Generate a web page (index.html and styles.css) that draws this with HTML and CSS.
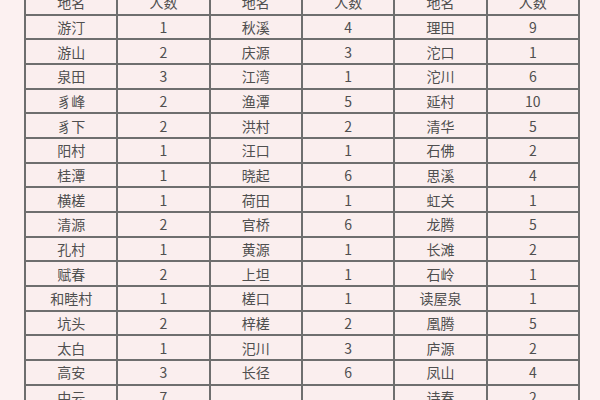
FILE: index.html
```html
<!DOCTYPE html>
<html lang="zh">
<head>
<meta charset="utf-8">
<link rel="stylesheet" href="styles.css">
</head>
<body>
<div class="page">
<table class="grid">
<thead>
<tr><th>地名</th><th>人数</th><th>地名</th><th>人数</th><th>地名</th><th>人数</th></tr>
</thead>
<tbody>
<tr><td>游汀</td><td>1</td><td>秋溪</td><td>4</td><td>理田</td><td>9</td></tr>
<tr><td>游山</td><td>2</td><td>庆源</td><td>3</td><td>沱口</td><td>1</td></tr>
<tr><td>泉田</td><td>3</td><td>江湾</td><td>1</td><td>沱川</td><td>6</td></tr>
<tr><td>豸峰</td><td>2</td><td>渔潭</td><td>5</td><td>延村</td><td>10</td></tr>
<tr><td>豸下</td><td>2</td><td>洪村</td><td>2</td><td>清华</td><td>5</td></tr>
<tr><td>阳村</td><td>1</td><td>汪口</td><td>1</td><td>石佛</td><td>2</td></tr>
<tr><td>桂潭</td><td>1</td><td>晓起</td><td>6</td><td>思溪</td><td>4</td></tr>
<tr><td>横槎</td><td>1</td><td>荷田</td><td>1</td><td>虹关</td><td>1</td></tr>
<tr><td>清源</td><td>2</td><td>官桥</td><td>6</td><td>龙腾</td><td>5</td></tr>
<tr><td>孔村</td><td>1</td><td>黄源</td><td>1</td><td>长滩</td><td>2</td></tr>
<tr><td>赋春</td><td>2</td><td>上坦</td><td>1</td><td>石岭</td><td>1</td></tr>
<tr><td>和睦村</td><td>1</td><td>槎口</td><td>1</td><td>读屋泉</td><td>1</td></tr>
<tr><td>坑头</td><td>2</td><td>梓槎</td><td>2</td><td>凰腾</td><td>5</td></tr>
<tr><td>太白</td><td>1</td><td>汜川</td><td>3</td><td>庐源</td><td>2</td></tr>
<tr><td>高安</td><td>3</td><td>长径</td><td>6</td><td>凤山</td><td>4</td></tr>
<tr><td>中云</td><td>7</td><td></td><td></td><td>诗春</td><td>2</td></tr>
</tbody>
</table>
</div>
</body>
</html>
```
FILE: styles.css
```css
html, body {
  margin: 0;
  padding: 0;
  background: #fcf1f1;
}
.page {
  width: 600px;
  height: 400px;
  overflow: hidden;
}
.grid {
  margin: -11px 0 0 24px;
  width: 556px;
  border-collapse: collapse;
  table-layout: fixed;
  background: #faeeee;
  font-family: "Noto Sans CJK SC", "Noto Sans", sans-serif;
  font-size: 14px;
  color: #4f4f4f;
}
.grid th, .grid td {
  border: 2px solid #6e6e6e;
  height: 22.67px;
  padding: 0;
  text-align: center;
  vertical-align: middle;
  font-weight: normal;
  line-height: 16px;
}
```
